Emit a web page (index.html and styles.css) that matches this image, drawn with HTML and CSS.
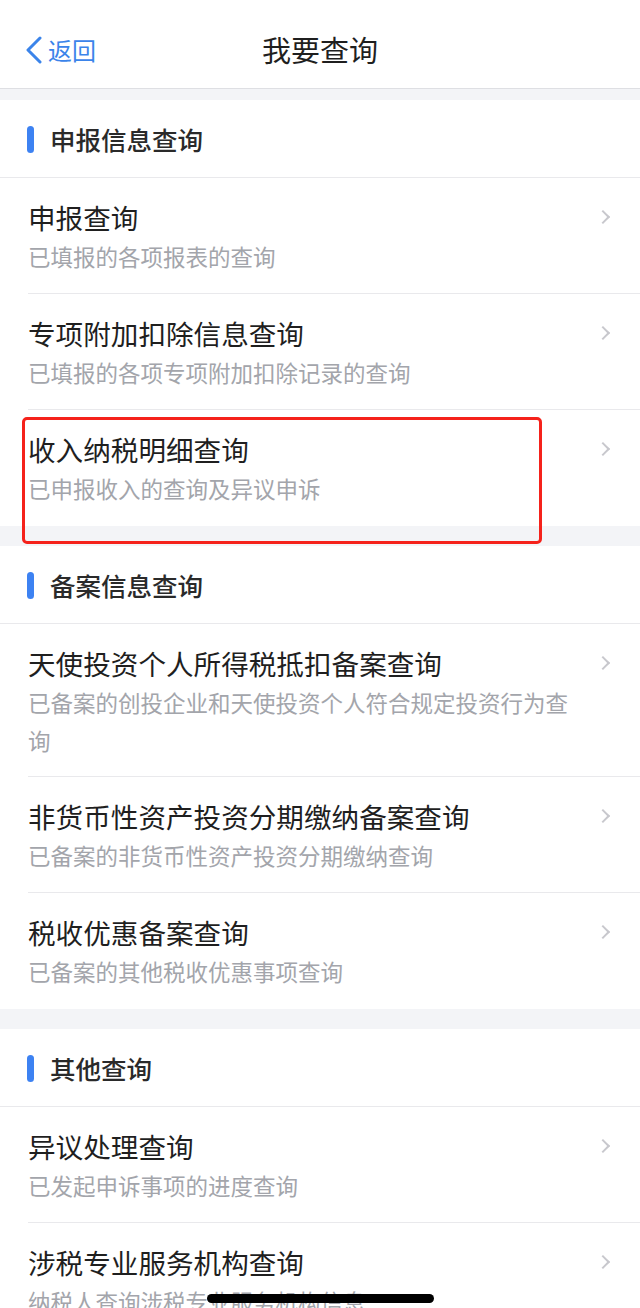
FILE: index.html
```html
<!DOCTYPE html>
<html lang="zh-CN">
  <head>
    <meta charset="UTF-8" />
    <meta name="viewport" content="width=device-width, initial-scale=1.0" />
    <title>我要查询</title>
    <link rel="stylesheet" href="styles.css">
  </head>
  <body>
    <div class="navbar">
      <div class="back">
        <svg class="back-icon" width="18" height="28" viewBox="0 0 18 28">
          <path d="M15 2 L3 14 L15 26" fill="none" stroke="#3b84ea" stroke-width="3" stroke-linecap="round" stroke-linejoin="round" />
        </svg>
        <span>返回</span>
      </div>
      <div class="nav-title">我要查询</div>
    </div>

    <div class="gap first"></div>

    <div class="section">
      <div class="section-head"><span class="bar"></span>申报信息查询</div>
      <div class="item">
        <div class="item-text">
          <div class="item-title">申报查询</div>
          <div class="item-sub">已填报的各项报表的查询</div>
        </div>
        <span class="arrow"></span>
      </div>
      <div class="item">
        <div class="item-text">
          <div class="item-title">专项附加扣除信息查询</div>
          <div class="item-sub">已填报的各项专项附加扣除记录的查询</div>
        </div>
        <span class="arrow"></span>
      </div>
      <div class="item last">
        <div class="item-text">
          <div class="item-title">收入纳税明细查询</div>
          <div class="item-sub">已申报收入的查询及异议申诉</div>
        </div>
        <span class="arrow"></span>
        <div class="highlight"></div>
      </div>
    </div>

    <div class="gap"></div>

    <div class="section">
      <div class="section-head"><span class="bar"></span>备案信息查询</div>
      <div class="item tall">
        <div class="item-text">
          <div class="item-title">天使投资个人所得税抵扣备案查询</div>
          <div class="item-sub">已备案的创投企业和天使投资个人符合规定投资行为查询</div>
        </div>
        <span class="arrow"></span>
      </div>
      <div class="item">
        <div class="item-text">
          <div class="item-title">非货币性资产投资分期缴纳备案查询</div>
          <div class="item-sub">已备案的非货币性资产投资分期缴纳查询</div>
        </div>
        <span class="arrow"></span>
      </div>
      <div class="item last">
        <div class="item-text">
          <div class="item-title">税收优惠备案查询</div>
          <div class="item-sub">已备案的其他税收优惠事项查询</div>
        </div>
        <span class="arrow"></span>
      </div>
    </div>

    <div class="gap"></div>

    <div class="section">
      <div class="section-head"><span class="bar"></span>其他查询</div>
      <div class="item">
        <div class="item-text">
          <div class="item-title">异议处理查询</div>
          <div class="item-sub">已发起申诉事项的进度查询</div>
        </div>
        <span class="arrow"></span>
      </div>
      <div class="item last">
        <div class="item-text">
          <div class="item-title">涉税专业服务机构查询</div>
          <div class="item-sub">纳税人查询涉税专业服务机构信息</div>
        </div>
        <span class="arrow"></span>
      </div>
    </div>

    <div class="home-bar"></div>
  </body>
</html>
```

FILE: styles.css
```css
* {
  margin: 0;
  padding: 0;
  box-sizing: border-box;
}

body {
  font-family: "Noto Sans CJK SC", "Noto Sans", sans-serif;
  background-color: #ffffff;
  color: #222222;
  height: 1308px;
  overflow: hidden;
}

.navbar {
  height: 89px;
  border-bottom: 1px solid #dedfe3;
  display: flex;
  align-items: center;
  justify-content: center;
  position: relative;
}

.back {
  position: absolute;
  left: 25px;
  top: 34px;
  display: flex;
  align-items: center;
  color: #3b84ea;
  font-size: 24px;
  line-height: 32px;
}

.back-icon {
  margin-right: 5px;
}

.nav-title {
  font-size: 29px;
  line-height: 40px;
  color: #1f1f1f;
  margin-top: 10px;
}

.gap {
  height: 20px;
  background-color: #f3f4f7;
}

.gap.first {
  height: 11px;
}

.section-head {
  height: 78px;
  border-bottom: 1px solid #e9e9ec;
  display: flex;
  align-items: center;
  padding-left: 27px;
  font-size: 25.5px;
  font-weight: 500;
  color: #2a2a2a;
}

.bar {
  width: 7px;
  height: 27px;
  border-radius: 4px;
  background-color: #3d82f2;
  margin-right: 16px;
  margin-top: 1px;
}

.item {
  position: relative;
  display: flex;
  align-items: flex-start;
  margin-left: 28px;
  padding: 19px 29px 18px 0;
  border-bottom: 1px solid #e9e9ec;
}

.item.tall {
  padding-bottom: 17px;
}

.item.last {
  border-bottom: none;
  padding-bottom: 19px;
}

.item-text {
  flex: 1;
  padding-right: 30px;
}

.item-title {
  font-size: 27.6px;
  line-height: 40px;
  color: #1f1f1f;
}

.item-sub {
  font-size: 22.5px;
  line-height: 38px;
  color: #a3a5ab;
}

.arrow {
  width: 10px;
  height: 10px;
  margin-top: 15px;
  margin-right: 3px;
  border-top: 2px solid #c8c8cd;
  border-right: 2px solid #c8c8cd;
  transform: rotate(45deg);
}

.highlight {
  position: absolute;
  left: -6px;
  top: 7px;
  width: 520px;
  height: 127px;
  border: 3px solid #f5221b;
  border-radius: 5px;
}

.home-bar {
  position: fixed;
  left: 207px;
  bottom: 5px;
  width: 227px;
  height: 9px;
  border-radius: 5px;
  background-color: #000000;
}
```
